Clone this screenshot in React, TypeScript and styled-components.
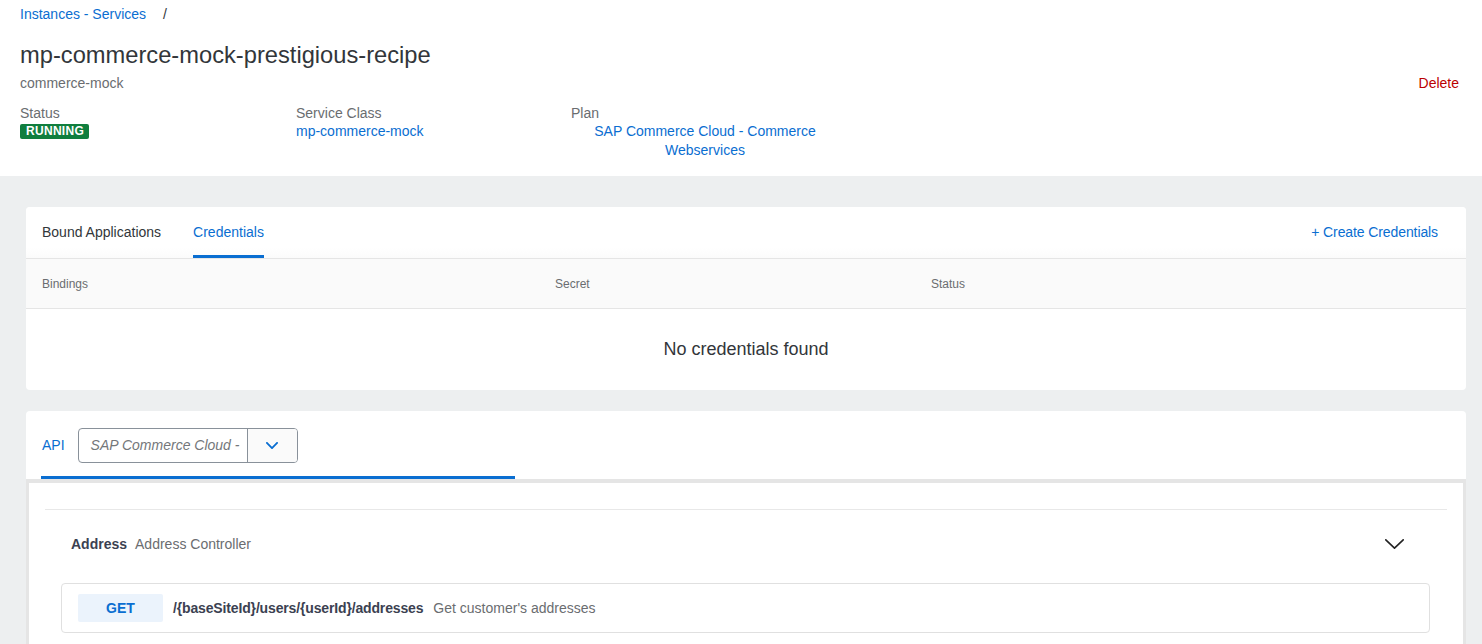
import React from "react";
import styled, { createGlobalStyle } from "styled-components";

const Global = createGlobalStyle`
  html, body { margin: 0; padding: 0; background: #edeff0; }
  body { font-family: "Liberation Sans", Arial, sans-serif; color: #32363a; }
  * { box-sizing: border-box; }
`;

const Page = styled.div`
  background: #edeff0;
  overflow: hidden;
  height: 644px;
`;

const Header = styled.header`
  background: #fff;
  padding: 4px 23px 16px 20px;
`;

const Breadcrumb = styled.nav`
  display: flex;
  align-items: center;
  gap: 17px;
  font-size: 14px;
  line-height: 20px;
  height: 20px;
`;

const Link = styled.a`
  color: #0a6ed1;
  text-decoration: none;
  cursor: pointer;
`;

const Slash = styled.span`
  color: #32363a;
`;

const Title = styled.h1`
  margin: 16px 0 0;
  font-size: 23.7px;
  line-height: 30px;
  font-weight: 400;
  color: #32363a;
`;

const SubRow = styled.div`
  display: flex;
  justify-content: space-between;
  align-items: center;
  margin-top: 4px;
  font-size: 14px;
  line-height: 18px;
`;

const Subtitle = styled.span`
  color: #6a6d70;
`;

const Danger = styled.a`
  color: #bb0000;
  cursor: pointer;
`;

const InfoGrid = styled.div`
  display: grid;
  grid-template-columns: 276px 275px 268px;
  margin-top: 12px;
`;

const InfoCell = styled.div`
  display: flex;
  flex-direction: column;
`;

const InfoLabel = styled.span`
  font-size: 14px;
  line-height: 18px;
  color: #6a6d70;
`;

const InfoValue = styled.a<{ $center?: boolean }>`
  font-size: 14px;
  line-height: 19px;
  color: #0a6ed1;
  text-align: ${(p) => (p.$center ? "center" : "left")};
  cursor: pointer;
`;

const Badge = styled.span`
  align-self: flex-start;
  margin-top: 2px;
  height: 15px;
  padding: 0 5px 0 6px;
  background: #107e3e;
  color: #fff;
  font-size: 12px;
  font-weight: 700;
  line-height: 15px;
  border-radius: 2px;
  letter-spacing: 0.3px;
`;

const Body = styled.main`
  padding: 31px 16px 0 26px;
  display: flex;
  flex-direction: column;
  gap: 21px;
`;

const Card = styled.section`
  background: #fff;
  border-radius: 4px;
`;

const TabBar = styled.div`
  display: flex;
  align-items: stretch;
  height: 52px;
  padding: 0 28px 0 16px;
  border-bottom: 1px solid #e5e5e5;
  background: linear-gradient(to bottom, #fff 80%, #fbfbfb);
  border-radius: 4px 4px 0 0;
`;

const Tab = styled.div<{ $active?: boolean }>`
  display: flex;
  align-items: center;
  margin-right: 32px;
  padding-top: 1px;
  font-size: 14px;
  color: ${(p) => (p.$active ? "#0a6ed1" : "#32363a")};
  border-bottom: 3px solid ${(p) => (p.$active ? "#0a6ed1" : "transparent")};
  border-radius: 2px 2px 0 0;
  cursor: pointer;
`;

const Spacer = styled.div`
  flex: 1;
`;

const ActionLink = styled.a`
  align-self: center;
  margin-top: -2px;
  font-size: 14px;
  color: #0a6ed1;
  letter-spacing: -0.1px;
  cursor: pointer;
`;

const Table = styled.table`
  width: 100%;
  border-collapse: collapse;
`;

const Th = styled.th<{ $w?: string }>`
  height: 49px;
  padding: 2px 16px 0;
  text-align: left;
  font-size: 12px;
  font-weight: 400;
  color: #6a6d70;
  background: #fafafa;
  border-bottom: 1px solid #e5e5e5;
  width: ${(p) => p.$w || "auto"};
`;

const EmptyCell = styled.td`
  height: 82px;
  text-align: center;
  font-size: 18px;
  color: #32363a;
`;

const ApiTabBar = styled.div`
  display: flex;
  height: 68px;
  padding-left: 15px;
`;

const ApiTab = styled.div`
  width: 474px;
  display: flex;
  align-items: flex-start;
  gap: 13px;
  padding: 17px 0 0 1px;
  border-bottom: 3px solid #0a6ed1;
  position: relative;
  z-index: 1;
  margin-bottom: -4px;
  height: 68px;
`;

const ApiLabel = styled.span`
  font-size: 14px;
  color: #0a6ed1;
  line-height: 35px;
`;

const Select = styled.div`
  display: flex;
  width: 220px;
  height: 35px;
  border: 1px solid #89919a;
  border-radius: 4px;
  overflow: hidden;
`;

const SelectInput = styled.div`
  flex: 1;
  padding: 0 12px;
  font-size: 14px;
  font-style: italic;
  line-height: 33px;
  color: #74777a;
  white-space: nowrap;
  overflow: hidden;
`;

const SelectButton = styled.button`
  width: 50px;
  border: none;
  border-left: 1px solid #89919a;
  background: #fafafa;
  display: flex;
  align-items: center;
  justify-content: center;
  padding: 0;
  cursor: pointer;
`;

const DocFrame = styled.div`
  border: 3px solid #e5e5e5;
  border-top-width: 4px;
  border-bottom: none;
  background: #fff;
  padding: 26px 16px 0 16px;
  height: 200px;
`;

const Section = styled.div`
  border-top: 1px solid #e8e8e8;
`;

const SectionHeader = styled.div`
  display: flex;
  align-items: center;
  gap: 8px;
  padding: 24px 43px 24px 26px;
  line-height: 20px;
`;

const TagName = styled.span`
  font-size: 14px;
  font-weight: 700;
  color: #3b4151;
`;

const TagDesc = styled.span`
  font-size: 14px;
  color: #6a6d70;
  flex: 1;
`;

const OpList = styled.div`
  padding: 5px 17px 0 16px;
`;

const Operation = styled.div`
  display: flex;
  align-items: center;
  gap: 10px;
  padding: 10px 16px;
  border: 1px solid #e0e0e0;
  border-radius: 4px;
`;

const Method = styled.span`
  width: 85px;
  height: 28px;
  background: #ebf3fc;
  color: #0a6ed1;
  font-size: 14px;
  font-weight: 700;
  line-height: 28px;
  text-align: center;
  border-radius: 2px;
`;

const Path = styled.span`
  font-size: 14px;
  font-weight: 700;
  color: #3b4151;
  letter-spacing: -0.15px;
`;

const OpDesc = styled.span`
  font-size: 14px;
  color: #6a6d70;
`;

const Chevron = ({ color, w, h, sw }: { color: string; w: number; h: number; sw: number }) => (
  <svg width={w} height={h} viewBox={`0 0 ${w} ${h}`} fill="none">
    <path
      d={`M${sw / 2} ${sw / 2} L${w / 2} ${h - sw / 2} L${w - sw / 2} ${sw / 2}`}
      stroke={color}
      strokeWidth={sw}
      strokeLinecap="round"
      strokeLinejoin="round"
    />
  </svg>
);

export default function App() {
  return (
    <Page>
      <Global />
      <Header>
        <Breadcrumb>
          <Link>Instances - Services</Link>
          <Slash>/</Slash>
        </Breadcrumb>
        <Title>mp-commerce-mock-prestigious-recipe</Title>
        <SubRow>
          <Subtitle>commerce-mock</Subtitle>
          <Danger>Delete</Danger>
        </SubRow>
        <InfoGrid>
          <InfoCell>
            <InfoLabel>Status</InfoLabel>
            <Badge>RUNNING</Badge>
          </InfoCell>
          <InfoCell>
            <InfoLabel>Service Class</InfoLabel>
            <InfoValue>mp-commerce-mock</InfoValue>
          </InfoCell>
          <InfoCell>
            <InfoLabel>Plan</InfoLabel>
            <InfoValue $center>
              SAP Commerce Cloud - Commerce
              <br />
              Webservices
            </InfoValue>
          </InfoCell>
        </InfoGrid>
      </Header>
      <Body>
        <Card>
          <TabBar>
            <Tab>Bound Applications</Tab>
            <Tab $active>Credentials</Tab>
            <Spacer />
            <ActionLink>+ Create Credentials</ActionLink>
          </TabBar>
          <Table>
            <thead>
              <tr>
                <Th $w="513px">Bindings</Th>
                <Th $w="376px">Secret</Th>
                <Th>Status</Th>
              </tr>
            </thead>
            <tbody>
              <tr>
                <EmptyCell colSpan={3}>No credentials found</EmptyCell>
              </tr>
            </tbody>
          </Table>
        </Card>
        <Card>
          <ApiTabBar>
            <ApiTab>
              <ApiLabel>API</ApiLabel>
              <Select>
                <SelectInput>SAP Commerce Cloud -</SelectInput>
                <SelectButton aria-label="open">
                  <Chevron color="#0a6ed1" w={12} h={7} sw={1.8} />
                </SelectButton>
              </Select>
            </ApiTab>
          </ApiTabBar>
          <DocFrame>
            <Section>
              <SectionHeader>
                <TagName>Address</TagName>
                <TagDesc>Address Controller</TagDesc>
                <Chevron color="#222" w={19} h={10} sw={1.6} />
              </SectionHeader>
              <OpList>
                <Operation>
                  <Method>GET</Method>
                  <Path>/{"{baseSiteId}"}/users/{"{userId}"}/addresses</Path>
                  <OpDesc>Get customer's addresses</OpDesc>
                </Operation>
              </OpList>
            </Section>
          </DocFrame>
        </Card>
      </Body>
    </Page>
  );
}
